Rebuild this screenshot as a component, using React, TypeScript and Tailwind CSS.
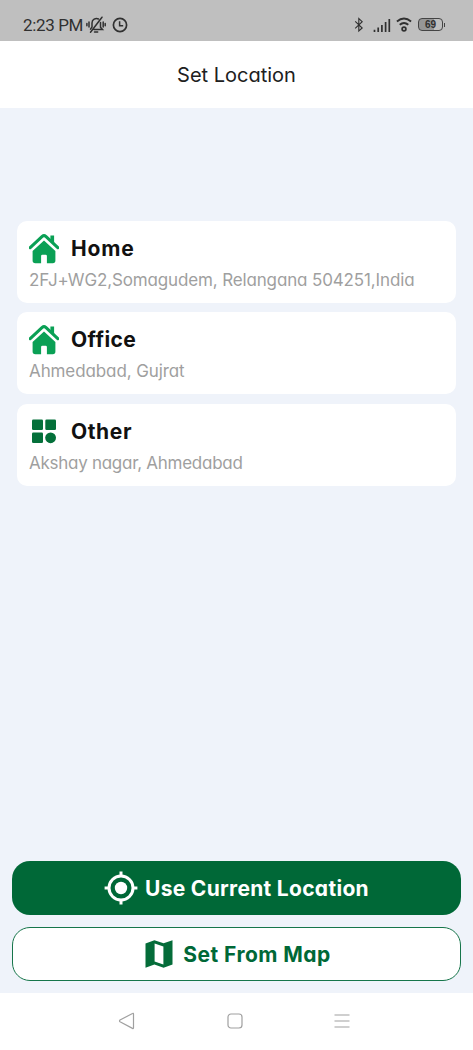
import React from "react";

const HouseIcon = () => (
  <svg className="h-[30px] w-[30px]" viewBox="0 0 30 30" fill="none">
    <path d="M1.2 13.7 13.2 2.4Q15 .9 16.8 2.4L28.8 13.7" stroke="#0aa055" strokeWidth="3.1" strokeLinecap="round" />
    <path d="M21.4 1.6h3.7v9.2l-3.7-3.4z" fill="#0aa055" />
    <path d="M15 6.6 26.4 17V26.6q0 2.6-2.6 2.6h-5.9V22q0-1.2-1.2-1.2h-3.4q-1.2 0-1.2 1.2v7.2H6.3q-2.7 0-2.7-2.6V17z" fill="#0aa055" />
  </svg>
);

const GridIcon = () => (
  <svg className="h-[30px] w-[30px]" viewBox="0 0 30 30" fill="#04703a">
    <rect x="3" y="2.5" width="11" height="10.5" rx="1.3" />
    <rect x="16.3" y="2.5" width="10.7" height="10.5" rx="1.3" />
    <rect x="3" y="15.6" width="11" height="10.5" rx="1.3" />
    <circle cx="21.6" cy="20.8" r="5.4" />
  </svg>
);

const TargetIcon = () => (
  <svg className="h-[34px] w-[34px] shrink-0" viewBox="0 0 34 34" fill="none" stroke="#fff" strokeWidth="3">
    <circle cx="17" cy="17" r="12" />
    <circle cx="17" cy="17" r="6.2" fill="#fff" stroke="none" />
    <path d="M17 .6V5M17 29v4.4M.6 17H5M29 17h4.4" />
  </svg>
);

const MapIcon = () => (
  <svg className="h-7 w-7 shrink-0" viewBox="0 0 28 28" fill="#046c39" fillRule="evenodd">
    <path d="M.5 3.4 9.4.3l9.2 3L27.5.2v24.3l-8.9 3.2-9.2-3.2-8.9 3.2zM9.6 3.6v18l8.8 3v-18z" />
  </svg>
);

const StatusBar = () => (
  <header className="flex h-[41px] shrink-0 items-center bg-[#bfbfbf] pt-[9px] pr-[28px] pl-[23px] text-[#303030]">
    <span className="w-[63px] font-[family-name:Roboto] text-[17px] leading-5 whitespace-nowrap tracking-[-0.35px]">2:23 PM</span>
    <svg className="h-5 w-5" viewBox="0 0 20 20" fill="none" stroke="currentColor" strokeWidth="1.5" strokeLinecap="round">
      <path d="M4.5 14.2 6 12V8a4.5 4.5 0 0 1 6.5-4M14.5 7.5v4.7l2 2.2H8M4.5 17.2 16 2.2M8.5 17h3.2M3 7v5M.9 8.5v2.3M17.2 7v5M19.2 8.5v2.3" />
    </svg>
    <svg className="ml-[6px] h-[16px] w-[16px]" viewBox="0 0 16 16" fill="none" stroke="currentColor" strokeWidth="1.7">
      <circle cx="8" cy="8" r="6.6" />
      <path d="M7.6 4.2v4.5h3.6" strokeWidth="1.5" />
    </svg>
    <svg className="ml-auto h-[16px] w-[10px]" viewBox="0 0 10 16" fill="none" stroke="currentColor" strokeWidth="1.1">
      <path d="m1.2 4.3 7 6.7L4.8 14V1.5L8.2 4.7l-7 6.7" />
    </svg>
    <svg className="ml-[9px] h-[16px] w-[18px]" viewBox="0 0 18 16" stroke="currentColor" strokeWidth="1.7">
      <path d="M1.5 15v-2.2M5.2 15v-4.5M8.9 15V8M12.6 15V5M16.3 15V2" />
    </svg>
    <svg className="ml-[5px] h-[16px] w-[16px]" viewBox="0 0 16 16" fill="none" stroke="currentColor" strokeWidth="1.9">
      <path d="M.9 4.4Q8-1.2 15.1 4.4M3.7 7.8q4.3-3.5 8.6 0" />
      <circle cx="8" cy="12" r="1.9" strokeWidth="1.7" />
    </svg>
    <div className="mb-px ml-[6px] flex items-center gap-px">
      <div className="flex h-[13px] w-[25px] items-center justify-center rounded-[4px] border border-[#444] bg-gradient-to-r from-[#969696] from-65% to-[#bfbfbf] to-65% font-['Liberation_Sans'] text-[10px] leading-none font-bold">69</div>
      <div className="h-[4px] w-px bg-[#444]" />
    </div>
  </header>
);

type Place = { name: string; address: string; icon: React.ReactNode; nameTracking: string; tracking: string };

const places: Place[] = [
  { name: "Home", address: "2FJ+WG2,Somagudem, Relangana 504251,India", icon: <HouseIcon />, nameTracking: "tracking-[0.8px]", tracking: "tracking-[-0.14px]" },
  { name: "Office", address: "Ahmedabad, Gujrat", icon: <HouseIcon />, nameTracking: "tracking-[0.4px]", tracking: "tracking-[-0.1px]" },
  { name: "Other", address: "Akshay nagar, Ahmedabad", icon: <GridIcon />, nameTracking: "tracking-[0.6px]", tracking: "tracking-[-0.27px]" },
];

const PlaceCard = ({ place }: { place: Place }) => (
  <li className="h-[82px] rounded-[10px] bg-white px-3 pt-[13px] last:mt-px">
    <div className="flex h-[30px] items-center gap-3">
      {place.icon}
      <h2 className={`text-[21px] leading-[30px] font-bold whitespace-nowrap text-[#111] ${place.nameTracking}`}>{place.name}</h2>
    </div>
    <p className={`mt-[5px] text-[17px] leading-[22px] whitespace-nowrap text-[#9f9f9f] ${place.tracking}`}>{place.address}</p>
  </li>
);

export default function App() {
  return (
    <div className="flex h-[1050px] w-[473px] flex-col overflow-hidden bg-[#eff3fa] font-[Inter,sans-serif] [font-feature-settings:'cv11']">
      <StatusBar />
      <div className="flex h-[67px] shrink-0 items-center justify-center bg-white">
        <h1 className="text-[20px] leading-7 font-normal whitespace-nowrap text-[#202020]">Set Location</h1>
      </div>
      <ul className="mt-[113px] mr-[17px] ml-[17px] flex flex-col gap-[9px]">
        {places.map((place) => (
          <PlaceCard key={place.name} place={place} />
        ))}
      </ul>
      <div className="mt-auto mb-3 flex flex-col gap-3 px-3">
        <button className="flex h-[54px] items-center justify-center gap-[7px] rounded-[18px] bg-[#006837] text-[21px] font-bold tracking-[0.3px] whitespace-nowrap text-white">
          <TargetIcon />
          <span className="pt-px">Use Current Location</span>
        </button>
        <button className="flex h-[54px] items-center justify-center gap-[10px] rounded-[18px] border border-[#16754a] bg-white pl-[3px] text-[21px] font-bold tracking-[0.45px] whitespace-nowrap text-[#006837]">
          <MapIcon />
          <span className="pt-px">Set From Map</span>
        </button>
      </div>
      <nav className="flex h-[57px] shrink-0 items-center justify-between bg-white pr-[123px] pb-[2px] pl-[118px] text-[#a0a0a0]">
        <svg className="h-[18px] w-[18px]" viewBox="0 0 18 18" fill="none" stroke="currentColor" strokeWidth="1.2" strokeLinejoin="round">
          <path d="M2 8Q1 9 2 9.8l12.5 6.6q1 .5 1-.6V2q0-1.1-1-.5z" />
        </svg>
        <svg className="h-[16px] w-[16px]" viewBox="0 0 16 16" fill="none" stroke="currentColor" strokeWidth="1.2">
          <rect x="1" y="1" width="14" height="14" rx="3" />
        </svg>
        <svg className="h-[16px] w-[16px]" viewBox="0 0 16 16" stroke="currentColor" strokeWidth="1.1">
          <path d="M.5 2h15M.5 8h15M.5 14h15" />
        </svg>
      </nav>
    </div>
  );
}
